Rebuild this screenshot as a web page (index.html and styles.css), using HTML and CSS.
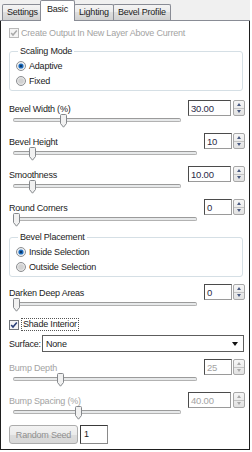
FILE: index.html
```html
<!DOCTYPE html>
<html lang="en">
<head>
    <meta charset="UTF-8">
    <title>Bevel - Basic</title>
    <link rel="stylesheet" href="styles.css">
</head>
<body>

<div class="window">
    <div class="tabs">
        <span class="tab">Settings</span>
        <span class="tab active">Basic</span>
        <span class="tab">Lighting</span>
        <span class="tab">Bevel Profile</span>
    </div>

    <div class="panel">
        <div class="check disabled top-check">
            <svg class="box" width="10" height="10" viewBox="0 0 10 10"><rect x="0.5" y="0.5" width="9" height="9" fill="#f4f4f4" stroke="#b9b9b9"/><path d="M2.2 5 L4 7 L7.8 2.6" fill="none" stroke="#a9a9a9" stroke-width="1.5"/></svg>
            <span>Create Output In New Layer Above Current</span>
        </div>

        <fieldset class="group group-scaling">
            <legend>Scaling Mode</legend>
            <div class="radio">
                <svg width="10" height="10" viewBox="0 0 10 10"><circle cx="5" cy="5" r="4.5" fill="#eef0f2" stroke="#8c8e91"/><circle cx="5" cy="5" r="2.6" fill="#1d6fc4"/><circle cx="5" cy="5" r="1.3" fill="#0b3768"/></svg>
                <span>Adaptive</span>
            </div>
            <div class="radio">
                <svg width="10" height="10" viewBox="0 0 10 10"><circle cx="5" cy="5" r="4.5" fill="#e6e6e6" stroke="#8c8e91"/><circle cx="5" cy="5" r="2.8" fill="#d2d2d2"/></svg>
                <span>Fixed</span>
            </div>
        </fieldset>

        <div class="field wide first-field">
            <span class="label">Bevel Width (%)</span>
            <div class="spin"><span class="value">30.00</span><span class="arrows"><i class="up"></i><i class="down"></i></span></div>
            <div class="slider"><div class="track"></div><svg class="thumb" style="left:47px" width="7" height="14" viewBox="0 0 7 14"><path d="M0.5 1.5 Q0.5 0.5 1.5 0.5 H5.5 Q6.5 0.5 6.5 1.5 V9.5 L3.5 13.2 L0.5 9.5 Z" fill="#f1f1f1" stroke="#85888c"/></svg></div>
        </div>

        <div class="field narrow">
            <span class="label">Bevel Height</span>
            <div class="spin"><span class="value">10</span><span class="arrows"><i class="up"></i><i class="down"></i></span></div>
            <div class="slider"><div class="track"></div><svg class="thumb" style="left:16px" width="7" height="14" viewBox="0 0 7 14"><path d="M0.5 1.5 Q0.5 0.5 1.5 0.5 H5.5 Q6.5 0.5 6.5 1.5 V9.5 L3.5 13.2 L0.5 9.5 Z" fill="#f1f1f1" stroke="#85888c"/></svg></div>
        </div>

        <div class="field wide">
            <span class="label">Smoothness</span>
            <div class="spin"><span class="value">10.00</span><span class="arrows"><i class="up"></i><i class="down"></i></span></div>
            <div class="slider"><div class="track"></div><svg class="thumb" style="left:16px" width="7" height="14" viewBox="0 0 7 14"><path d="M0.5 1.5 Q0.5 0.5 1.5 0.5 H5.5 Q6.5 0.5 6.5 1.5 V9.5 L3.5 13.2 L0.5 9.5 Z" fill="#f1f1f1" stroke="#85888c"/></svg></div>
        </div>

        <div class="field narrow">
            <span class="label">Round Corners</span>
            <div class="spin"><span class="value">0</span><span class="arrows"><i class="up"></i><i class="down"></i></span></div>
            <div class="slider"><div class="track"></div><svg class="thumb" style="left:0px" width="7" height="14" viewBox="0 0 7 14"><path d="M0.5 1.5 Q0.5 0.5 1.5 0.5 H5.5 Q6.5 0.5 6.5 1.5 V9.5 L3.5 13.2 L0.5 9.5 Z" fill="#f1f1f1" stroke="#85888c"/></svg></div>
        </div>

        <fieldset class="group group-placement">
            <legend>Bevel Placement</legend>
            <div class="radio">
                <svg width="10" height="10" viewBox="0 0 10 10"><circle cx="5" cy="5" r="4.5" fill="#eef0f2" stroke="#8c8e91"/><circle cx="5" cy="5" r="2.6" fill="#1d6fc4"/><circle cx="5" cy="5" r="1.3" fill="#0b3768"/></svg>
                <span>Inside Selection</span>
            </div>
            <div class="radio">
                <svg width="10" height="10" viewBox="0 0 10 10"><circle cx="5" cy="5" r="4.5" fill="#e6e6e6" stroke="#8c8e91"/><circle cx="5" cy="5" r="2.8" fill="#d2d2d2"/></svg>
                <span>Outside Selection</span>
            </div>
        </fieldset>

        <div class="field narrow after-group">
            <span class="label">Darken Deep Areas</span>
            <div class="spin"><span class="value">0</span><span class="arrows"><i class="up"></i><i class="down"></i></span></div>
            <div class="slider"><div class="track"></div><svg class="thumb" style="left:0px" width="7" height="14" viewBox="0 0 7 14"><path d="M0.5 1.5 Q0.5 0.5 1.5 0.5 H5.5 Q6.5 0.5 6.5 1.5 V9.5 L3.5 13.2 L0.5 9.5 Z" fill="#f1f1f1" stroke="#85888c"/></svg></div>
        </div>

        <div class="check shade-check">
            <svg class="box" width="10" height="10" viewBox="0 0 10 10"><rect x="0.5" y="0.5" width="9" height="9" fill="#f2f4f6" stroke="#70757b"/><path d="M2.2 5 L4 7 L7.8 2.6" fill="none" stroke="#283f78" stroke-width="1.6"/></svg>
            <span class="focus">Shade Interior</span>
        </div>

        <div class="surface">
            <span>Surface:</span>
            <div class="select"><span>None</span><i class="caret"></i></div>
        </div>

        <div class="field narrow disabled bump-depth">
            <span class="label">Bump Depth</span>
            <div class="spin"><span class="value">25</span><span class="arrows"><i class="up"></i><i class="down"></i></span></div>
            <div class="slider"><div class="track"></div><svg class="thumb" style="left:44px" width="7" height="14" viewBox="0 0 7 14"><path d="M0.5 1.5 Q0.5 0.5 1.5 0.5 H5.5 Q6.5 0.5 6.5 1.5 V9.5 L3.5 13.2 L0.5 9.5 Z" fill="#f1f1f1" stroke="#85888c"/></svg></div>
        </div>

        <div class="field wide disabled">
            <span class="label">Bump Spacing (%)</span>
            <div class="spin"><span class="value">40.00</span><span class="arrows"><i class="up"></i><i class="down"></i></span></div>
            <div class="slider"><div class="track"></div><svg class="thumb" style="left:62px" width="7" height="14" viewBox="0 0 7 14"><path d="M0.5 1.5 Q0.5 0.5 1.5 0.5 H5.5 Q6.5 0.5 6.5 1.5 V9.5 L3.5 13.2 L0.5 9.5 Z" fill="#f1f1f1" stroke="#85888c"/></svg></div>
        </div>

        <div class="seed-row">
            <span class="button">Random Seed</span>
            <span class="seed">1</span>
        </div>
    </div>
</div>

</body>
</html>
```

FILE: styles.css
```css
body {
    margin: 0;
    font-family: "Liberation Sans", Arial, sans-serif;
    font-size: 9px;
    letter-spacing: -0.2px;
    color: #1b1b1b;
    background: #fff;
}

.window {
    width: 250px;
    height: 450px;
    display: flex;
    flex-direction: column;
    background: #f0f0f0;
}

/* tab strip */
.tabs {
    height: 21px;
    box-sizing: border-box;
    display: flex;
    align-items: flex-end;
    padding-left: 2px;
    border-bottom: 1px solid #898c95;
}

.tab {
    height: 16px;
    box-sizing: border-box;
    padding: 0 4px;
    line-height: 15px;
    border: 1px solid #898c95;
    border-bottom: none;
    border-radius: 2px 2px 0 0;
    background: linear-gradient(#f4f4f4, #ebebeb 50%, #dedede 50%, #d1d1d1);
    margin-right: -1px;
}

.tab.active {
    height: 21px;
    margin: 0 -1px -1px -2px;
    padding: 0 6px;
    line-height: 16px;
    background: #fff;
    position: relative;
    z-index: 1;
}

/* main page */
.panel {
    flex: 1;
    background: #fff;
    border: 1px solid #1e1e1e;
    border-top: none;
    padding: 0 4px 0 7px;
}

.check {
    display: flex;
    align-items: center;
    height: 13px;
}

.check .box {
    margin: 0 2px 0 1px;
}

.check.disabled {
    color: #a3a3a3;
}

.top-check {
    margin-top: 5px;
}

.group {
    margin: 7px 2px 0 1px;
    padding: 1px 6px 2px;
    border: 1px solid #d5dfe5;
    border-radius: 3px;
}

.group legend {
    padding: 0 2px;
    margin-left: 2px;
    line-height: 11px;
}

.radio {
    display: flex;
    align-items: center;
    height: 15px;
}

.radio svg {
    margin-right: 3px;
}

.group-placement {
    margin-top: 0;
}

/* numeric fields: label + spinner, slider below */
.field {
    display: grid;
    grid-template-columns: 1fr auto;
    grid-template-rows: 16px 13px;
    column-gap: 7px;
    margin-bottom: 4px;
    padding-left: 1px;
}

.first-field {
    margin-top: 9px;
}

.after-group {
    margin-top: 7px;
}

.bump-depth {
    margin-top: 7px;
}

.field .label {
    align-self: center;
    padding-top: 1px;
}

.field.disabled .label,
.field.disabled .value {
    color: #a3a3a3;
}

.spin {
    display: flex;
    grid-row: 1 / 2;
    grid-column: 2;
}

.spin .value {
    box-sizing: border-box;
    height: 16px;
    padding: 2px 0 0 2px;
    border: 1px solid;
    border-color: #4b4b4b #9a9a9a #9a9a9a #4b4b4b;
    background: #fff;
    color: #2b2b48;
    font-size: 9.5px;
}

.wide .spin .value {
    width: 43px;
    margin-right: 1px;
}

.narrow .spin .value {
    width: 28px;
}

.arrows {
    width: 12px;
    height: 16px;
    box-sizing: border-box;
    margin-left: 1px;
    border: 1px solid #a8a8a8;
    border-radius: 2px;
    background: linear-gradient(#f7f7f7, #e2e2e2);
    display: flex;
    flex-direction: column;
}

.arrows i {
    flex: 1;
    display: flex;
    align-items: center;
    justify-content: center;
}

.arrows i::before {
    content: "";
    border-left: 2.5px solid transparent;
    border-right: 2.5px solid transparent;
}

.arrows .up {
    border-bottom: 1px solid #c4c4c4;
}

.arrows .up::before {
    border-bottom: 3px solid #4a5a80;
}

.arrows .down::before {
    border-top: 3px solid #4a5a80;
}

.disabled .arrows i::before {
    border-top-color: #a8a8a8;
    border-bottom-color: #a8a8a8;
}

.slider {
    grid-column: 1;
    grid-row: 2;
    position: relative;
    margin-left: 4px;
}

.track {
    margin-top: 2px;
    height: 4px;
    box-sizing: border-box;
    border: 1px solid #b2b2b2;
    border-top-color: #9b9b9b;
    border-radius: 2px;
    background: #e7e9ea;
}

.thumb {
    position: absolute;
    top: -2px;
}

/* shade interior + surface */
.shade-check {
    margin-top: 5px;
}

.focus {
    border: 1px dotted #555;
    padding: 0 1px;
    line-height: 11px;
}

.surface {
    display: flex;
    align-items: center;
    margin-top: 4px;
    padding-left: 1px;
}

.surface > span {
    width: 33px;
}

.select {
    flex: 1;
    height: 17px;
    box-sizing: border-box;
    margin-right: 1px;
    border: 1px solid #5d5d5d;
    display: flex;
    align-items: center;
    justify-content: space-between;
    padding: 0 5px 0 3px;
}

.caret {
    border-left: 3px solid transparent;
    border-right: 3px solid transparent;
    border-top: 4px solid #111;
}

/* bottom row */
.seed-row {
    display: flex;
    gap: 2px;
    margin-top: 0;
    padding-left: 1px;
}

.button {
    width: 69px;
    height: 19px;
    box-sizing: border-box;
    border: 1px solid #acacac;
    border-radius: 3px;
    background: linear-gradient(#f3f3f3, #ebebeb 50%, #dddddd 50%, #d7d7d7);
    color: #8f8f8f;
    display: flex;
    align-items: center;
    justify-content: center;
}

.seed {
    width: 28px;
    height: 19px;
    box-sizing: border-box;
    border: 1px solid;
    border-color: #3a3a3a #8a8a8a #8a8a8a #3a3a3a;
    padding: 3px 0 0 3px;
}
```
